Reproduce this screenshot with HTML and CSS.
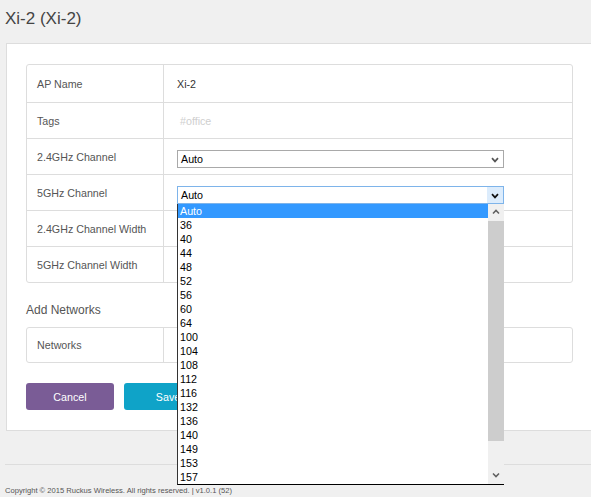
FILE: index.html
```html
<!DOCTYPE html>
<html>
<head>
<meta charset="utf-8">
<title>Xi-2 (Xi-2)</title>
<link rel="stylesheet" href="styles.css">
</head>
<body>
<h1 class="title">Xi-2 (Xi-2)</h1>
<div class="card">
  <div class="tbl">
    <div class="row row-first">
      <div class="label">AP Name</div>
      <div class="value"><span class="val-text">Xi-2</span></div>
    </div>
    <div class="row">
      <div class="label">Tags</div>
      <div class="value"><span class="placeholder">#office</span></div>
    </div>
    <div class="row">
      <div class="label">2.4GHz Channel</div>
      <div class="value">
        <div class="select">
          <span class="select-text">Auto</span>
          <span class="select-arrow"><svg width="8" height="6" viewBox="0 0 8 6"><path d="M1 1.2 L4 4.4 L7 1.2" fill="none" stroke="#555" stroke-width="1.7"/></svg></span>
        </div>
      </div>
    </div>
    <div class="row">
      <div class="label">5GHz Channel</div>
      <div class="value">
        <div class="select select-open">
          <span class="select-text">Auto</span>
          <span class="select-arrow"><svg width="8" height="6" viewBox="0 0 8 6"><path d="M1 1.2 L4 4.4 L7 1.2" fill="none" stroke="#111" stroke-width="1.7"/></svg></span>
          <div class="dropdown">
            <div class="options">
              <div class="opt opt-sel">Auto</div>
              <div class="opt">36</div>
              <div class="opt">40</div>
              <div class="opt">44</div>
              <div class="opt">48</div>
              <div class="opt">52</div>
              <div class="opt">56</div>
              <div class="opt">60</div>
              <div class="opt">64</div>
              <div class="opt">100</div>
              <div class="opt">104</div>
              <div class="opt">108</div>
              <div class="opt">112</div>
              <div class="opt">116</div>
              <div class="opt">132</div>
              <div class="opt">136</div>
              <div class="opt">140</div>
              <div class="opt">149</div>
              <div class="opt">153</div>
              <div class="opt">157</div>
            </div>
            <div class="sb">
              <div class="sb-btn"><svg width="8" height="6" viewBox="0 0 8 6"><path d="M1 4.6 L4 1.4 L7 4.6" fill="none" stroke="#606060" stroke-width="1.5"/></svg></div>
              <div class="sb-thumb"></div>
              <div class="sb-track"></div>
              <div class="sb-btn"><svg width="8" height="6" viewBox="0 0 8 6"><path d="M1 1.4 L4 4.6 L7 1.4" fill="none" stroke="#606060" stroke-width="1.5"/></svg></div>
            </div>
          </div>
        </div>
      </div>
    </div>
    <div class="row">
      <div class="label">2.4GHz Channel Width</div>
      <div class="value"></div>
    </div>
    <div class="row">
      <div class="label">5GHz Channel Width</div>
      <div class="value"></div>
    </div>
  </div>

  <h2 class="section-title">Add Networks</h2>
  <div class="tbl tbl-net">
    <div class="row">
      <div class="label">Networks</div>
      <div class="value"></div>
    </div>
  </div>

  <div class="actions">
    <button class="btn btn-cancel">Cancel</button>
    <button class="btn btn-save">Save</button>
  </div>
</div>
<div class="footer">Copyright © 2015 Ruckus Wireless. All rights reserved. | v1.0.1 (52)</div>
</body>
</html>
```
FILE: styles.css
```css
html, body {
  margin: 0;
  padding: 0;
  overflow: hidden;
}
body {
  background: #f0f0f0;
  font-family: "Liberation Sans", Arial, sans-serif;
  color: #333;
}
.title {
  margin: 0;
  padding: 9px 0 0 5px;
  font-size: 17px;
  line-height: 20px;
  font-weight: normal;
  color: #444;
}
.card {
  margin: 14px 0 0 6px;
  background: #fff;
  border: 1px solid #ddd;
  border-right: none;
  padding: 20px 0 20px 19px;
}
.tbl {
  width: 547px;
  box-sizing: border-box;
  border: 1px solid #ddd;
  border-radius: 3px;
}
.row {
  display: flex;
  height: 35px;
}
.row-first {
  height: 37px;
}
.row + .row {
  border-top: 1px solid #ddd;
}
.tbl-net .row {
  height: 34px;
}
.label {
  width: 137px;
  box-sizing: border-box;
  flex: none;
  display: flex;
  align-items: center;
  padding-left: 10px;
  border-right: 1px solid #ddd;
  font-size: 10.7px;
  color: #555;
}
.value {
  flex: 1;
  display: flex;
  align-items: center;
  padding-left: 13px;
  font-size: 10.7px;
}
.val-text {
  color: #333;
}
.placeholder {
  color: #cfcfcf;
  padding-left: 3px;
}
.select {
  position: relative;
  width: 327px;
  height: 18px;
  box-sizing: border-box;
  margin-top: 4px;
  border: 1px solid #a9a9a9;
  background: #fff;
  display: flex;
  align-items: center;
  color: #000;
}
.select-text {
  padding-left: 3px;
  font-size: 10.7px;
}
.select-arrow {
  margin-left: auto;
  width: 16px;
  height: 100%;
  display: flex;
  align-items: center;
  justify-content: center;
  padding-top: 2px;
  box-sizing: border-box;
}
.select-open {
  border-color: #7eb4ea;
}
.select-open .select-arrow {
  background: #dcecfc;
}
.dropdown {
  position: absolute;
  z-index: 10;
  left: -1px;
  top: calc(100% + 1px);
  width: 327px;
  box-sizing: border-box;
  border-left: 1px solid #333;
  border-bottom: 1px solid #000;
  background: #fff;
  display: flex;
}
.options {
  flex: 1;
}
.opt {
  height: 14px;
  line-height: 14px;
  padding-left: 2px;
  font-size: 10.7px;
  color: #000;
}
.opt-sel {
  background: #3399ff;
  color: #fff;
}
.sb {
  width: 16px;
  flex: none;
  display: flex;
  flex-direction: column;
  background: #f0f0f0;
}
.sb-btn {
  height: 17px;
  display: flex;
  align-items: center;
  justify-content: center;
}
.sb-thumb {
  height: 220px;
  background: #cdcdcd;
}
.sb-track {
  flex: 1;
}
.section-title {
  margin: 20px 0 10px;
  font-size: 12px;
  line-height: 14px;
  font-weight: normal;
  color: #555;
}
.actions {
  display: flex;
  gap: 10px;
  margin-top: 20px;
}
.btn {
  width: 88px;
  height: 27px;
  border: none;
  border-radius: 3px;
  color: #fff;
  font-family: "Liberation Sans", Arial, sans-serif;
  font-size: 10.7px;
  padding: 0;
}
.btn-cancel {
  background: #7a5c96;
}
.btn-save {
  background: #0fa3c8;
}
.footer {
  margin: 33px 0 0 5px;
  border-top: 1px solid #ddd;
  padding-top: 21px;
  font-size: 7.6px;
  line-height: 10px;
  color: #555;
}
```
